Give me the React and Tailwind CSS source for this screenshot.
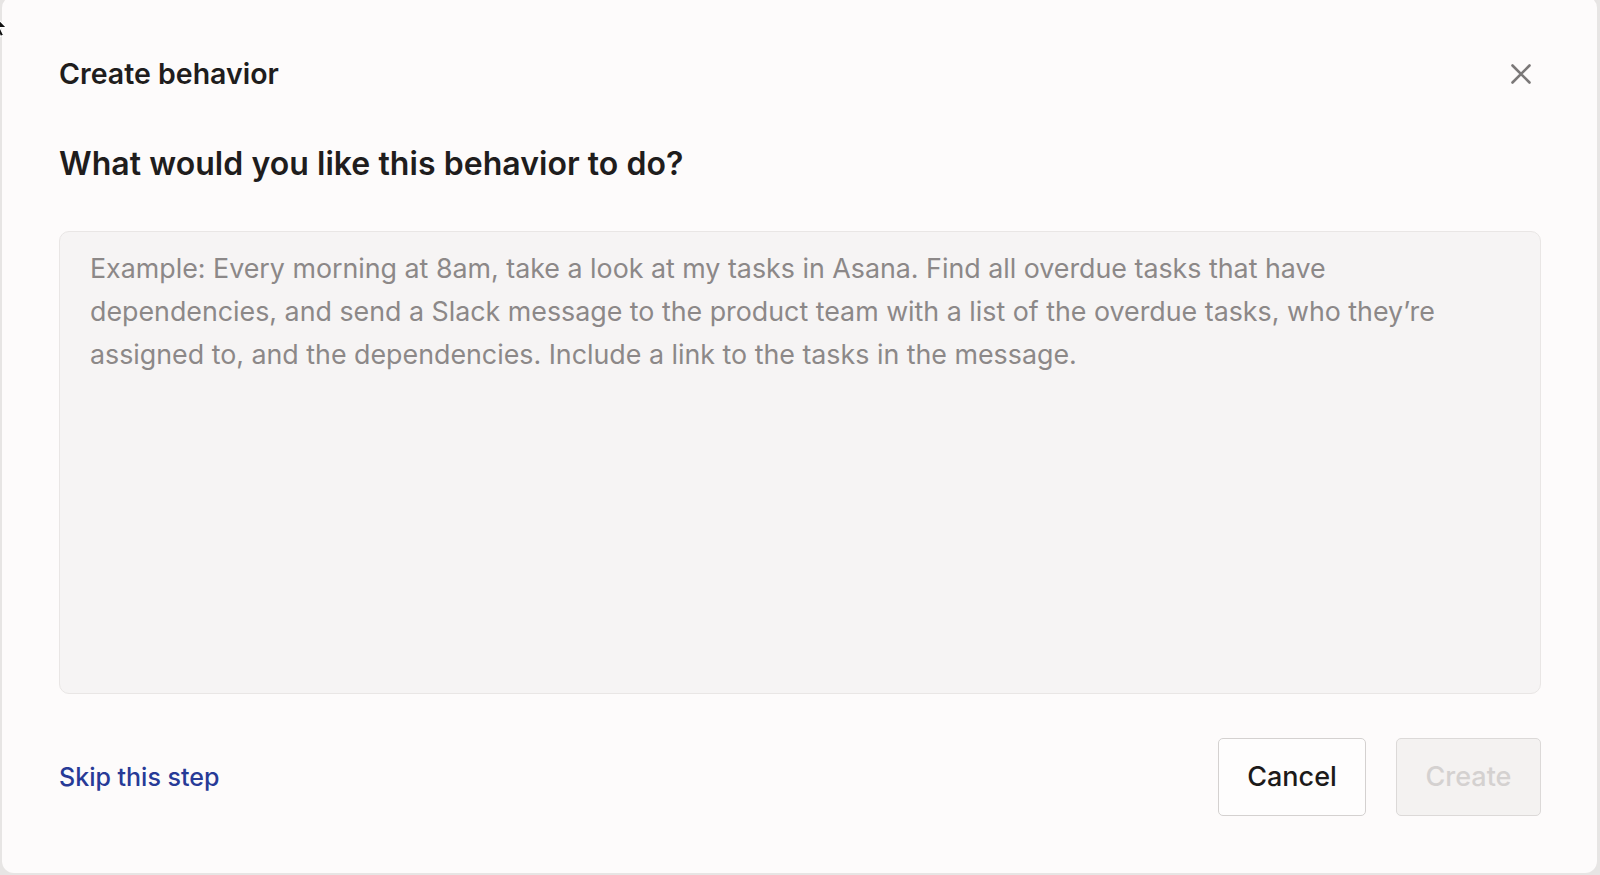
import React from "react";

export default function App() {
  return (
    <div className="relative h-[875px] w-[1600px] overflow-hidden bg-[#e7e5e4] pl-[2px] pr-[3px]" style={{ fontFamily: "Inter, 'Noto Sans', sans-serif" }}>
      <div className="-mt-[4px] flex h-[877px] flex-col rounded-[12px] bg-[#fdfbfb] pl-[57px] pr-[56px] pt-[58px]">
        <div className="flex h-[40px] items-center justify-between">
          <h1 className="text-[28.5px] font-semibold leading-[40px] text-[#1f1d1d]">Create behavior</h1>
          <button className="mr-[8px] flex h-[24px] w-[24px] items-center justify-center text-[#7b7878]" aria-label="Close">
            <svg width="20" height="20" viewBox="0 0 20 20" fill="none" stroke="currentColor" strokeWidth="2.6" strokeLinecap="round">
              <path d="M1.5 1.5 L18.5 18.5 M18.5 1.5 L1.5 18.5" />
            </svg>
          </button>
        </div>
        <h2 className="mt-[50px] text-[32px] font-semibold leading-[40px] tracking-[0.05px] text-[#1f1d1d]">What would you like this behavior to do?</h2>
        <textarea
          className="mt-[47px] h-[463px] w-full resize-none rounded-[10px] border border-[#e9e6e5] bg-[#f6f4f4] px-[30px] pt-[15px] text-[26.8px] leading-[43px] text-[#1f1d1d] outline-none placeholder:text-[#8c8888]"
          placeholder="Example: Every morning at 8am, take a look at my tasks in Asana. Find all overdue tasks that have dependencies, and send a Slack message to the product team with a list of the overdue tasks, who they’re assigned to, and the dependencies. Include a link to the tasks in the message."
        />
        <div className="mt-[44px] flex items-center justify-between">
          <a href="#" className="text-[25px] font-medium leading-[32px] text-[#273a97]">Skip this step</a>
          <div className="flex gap-[30px]">
            <button className="h-[78px] w-[148px] rounded-[5px] border border-[#d4d1d0] bg-[#fefdfd] text-[27px] font-medium text-[#1c1a1a]">Cancel</button>
            <button className="h-[78px] w-[145px] rounded-[5px] border border-[#dcd9d8] bg-[#f4f2f1] text-[27px] font-medium text-[#d4d1d0]" disabled>Create</button>
          </div>
        </div>
      </div>
      <svg className="absolute left-[-9px] top-[12px]" width="18" height="26" viewBox="0 0 18 26">
        <path d="M1 1 L1 21 L6 16.5 L9.5 24.5 L12.5 23 L9 15.5 L15.5 15.5 Z" fill="#111" stroke="#fff" strokeWidth="1.2" />
      </svg>
    </div>
  );
}
